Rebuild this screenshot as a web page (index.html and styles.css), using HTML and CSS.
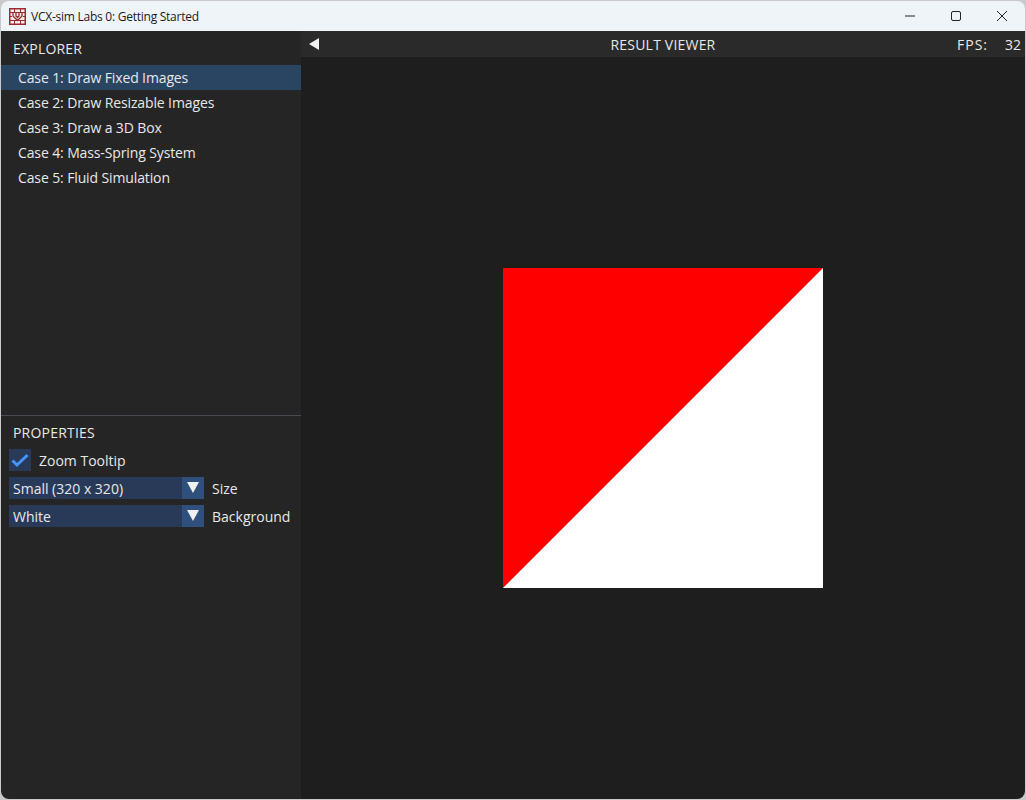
FILE: index.html
```html
<!DOCTYPE html>
<html lang="en">
<head>
    <meta charset="UTF-8">
    <meta name="viewport" content="width=device-width, initial-scale=1.0">
    <title>VCX-sim Labs 0: Getting Started</title>
    <link rel="stylesheet" href="styles.css">
</head>
<body>
    <div class="window">
        <div class="titlebar">
            <svg class="app-icon" width="17" height="17" viewBox="0 0 17 17">
                <rect x="0.75" y="0.75" width="15.5" height="15.5" fill="#f6ecec" stroke="#9c2a2e" stroke-width="1.5"/>
                <path d="M1 4.5H16M1 12.5H16M5.5 1V4.5M11.5 1V4.5M5.5 12.5V16M11.5 12.5V16M1 8.5H3M14 8.5H16" stroke="#9c2a2e" fill="none"/>
                <path d="M4 5V8L8.5 12.5L13 8V5M7 5V8L8.5 9.5L10 8V5" stroke="#9c2a2e" stroke-width="1.3" fill="none"/>
            </svg>
            <span class="title">VCX-sim Labs 0: Getting Started</span>
            <div class="win-buttons">
                <svg width="46" height="30" viewBox="0 0 46 30"><path d="M18 15H28" stroke="#222" fill="none"/></svg>
                <svg width="46" height="30" viewBox="0 0 46 30"><rect x="18.5" y="10.5" width="9" height="9" rx="1.5" stroke="#222" fill="none"/></svg>
                <svg width="46" height="30" viewBox="0 0 46 30"><path d="M18 10L28 20M28 10L18 20" stroke="#222" fill="none"/></svg>
            </div>
        </div>
        <div class="content">
            <div class="sidebar">
                <div class="explorer">
                    <div class="panel-title">EXPLORER</div>
                    <div class="case active">Case 1: Draw Fixed Images</div>
                    <div class="case">Case 2: Draw Resizable Images</div>
                    <div class="case">Case 3: Draw a 3D Box</div>
                    <div class="case">Case 4: Mass-Spring System</div>
                    <div class="case">Case 5: Fluid Simulation</div>
                </div>
                <div class="properties">
                    <div class="panel-title">PROPERTIES</div>
                    <div class="prop-row">
                        <div class="checkbox">
                            <svg width="22" height="22" viewBox="0 0 22 22"><path d="M3.5 11.5L8 16L18.5 6" stroke="#4296fa" stroke-width="3" fill="none"/></svg>
                        </div>
                        <span>Zoom Tooltip</span>
                    </div>
                    <div class="prop-row">
                        <div class="combo">
                            <span class="combo-value">Small (320 x 320)</span>
                            <span class="combo-arrow"></span>
                        </div>
                        <span>Size</span>
                    </div>
                    <div class="prop-row">
                        <div class="combo">
                            <span class="combo-value">White</span>
                            <span class="combo-arrow"></span>
                        </div>
                        <span>Background</span>
                    </div>
                </div>
            </div>
            <div class="viewer">
                <div class="viewer-bar">
                    <span class="collapse"></span>
                    <span class="viewer-title">RESULT VIEWER</span>
                    <span class="fps"><span class="fps-label">FPS:</span><span>32</span></span>
                </div>
                <div class="viewer-body">
                    <svg class="result" width="320" height="320" viewBox="0 0 320 320">
                        <rect width="320" height="320" fill="#fff"/>
                        <path d="M0 0H320L0 320Z" fill="#f00"/>
                    </svg>
                </div>
            </div>
        </div>
    </div>
</body>
</html>
```

FILE: styles.css
```css
* {
    box-sizing: border-box;
}
body {
    margin: 0;
    width: 1026px;
    height: 800px;
    overflow: hidden;
    background: #c9c9cc;
    font-family: "Open Sans", sans-serif;
    font-size: 14px;
    color: #e8e8e8;
}
.window {
    margin: 1px 1px 0 1px;
    height: 798px;
    border-radius: 8px;
    overflow: hidden;
    display: flex;
    flex-direction: column;
}
.titlebar {
    height: 30px;
    background: #eff4f9;
    color: #1a1a1a;
    display: flex;
    align-items: center;
    padding-left: 8px;
    font-size: 12px;
    flex-shrink: 0;
}
.app-icon {
    margin-right: 5px;
}
.title {
    flex: 1;
    letter-spacing: -0.25px;
}
.win-buttons {
    display: flex;
}
.win-buttons svg {
    display: block;
}
.content {
    flex: 1;
    display: flex;
    min-height: 0;
}
.sidebar {
    width: 300px;
    background: #252525;
    display: flex;
    flex-direction: column;
}
.explorer {
    height: 385px;
    border-bottom: 1px solid #4a4a52;
}
.panel-title {
    height: 34px;
    line-height: 36px;
    padding-left: 12px;
    letter-spacing: 0.2px;
}
.case {
    height: 25px;
    line-height: 25px;
    padding-left: 17px;
    letter-spacing: -0.12px;
}
.case.active {
    background: #2a4562;
}
.properties {
    flex: 1;
}
.properties .panel-title {
    height: 33px;
    line-height: 34px;
}
.prop-row {
    display: flex;
    align-items: center;
    height: 22px;
    margin: 0 0 6px 8px;
}
.checkbox {
    width: 22px;
    height: 22px;
    background: #293a58;
    margin-right: 8px;
}
.checkbox svg {
    display: block;
}
.combo {
    width: 195px;
    height: 22px;
    background: #293a58;
    display: flex;
    margin-right: 8px;
}
.combo-value {
    flex: 1;
    line-height: 24px;
    padding-left: 4px;
}
.combo-arrow {
    width: 22px;
    background: #2f4f7c;
    position: relative;
}
.combo-arrow::after {
    content: "";
    position: absolute;
    left: 5px;
    top: 5px;
    border-left: 6px solid transparent;
    border-right: 6px solid transparent;
    border-top: 11px solid #f0f0f0;
}
.viewer {
    flex: 1;
    display: flex;
    flex-direction: column;
    background: #1e1e1e;
}
.viewer-bar {
    height: 26px;
    background: #2a2a2a;
    display: flex;
    align-items: center;
    position: relative;
    flex-shrink: 0;
}
.collapse {
    margin-left: 8px;
    border-top: 6px solid transparent;
    border-bottom: 6px solid transparent;
    border-right: 10px solid #f0f0f0;
}
.viewer-title {
    position: absolute;
    left: 0;
    right: 0;
    text-align: center;
    letter-spacing: 0.2px;
}
.fps {
    position: absolute;
    right: 4px;
    width: 64px;
    display: flex;
    justify-content: space-between;
}
.fps-label {
    letter-spacing: 1px;
}
.viewer-body {
    flex: 1;
    display: flex;
    align-items: center;
    justify-content: center;
}
.result {
    display: block;
}
```
